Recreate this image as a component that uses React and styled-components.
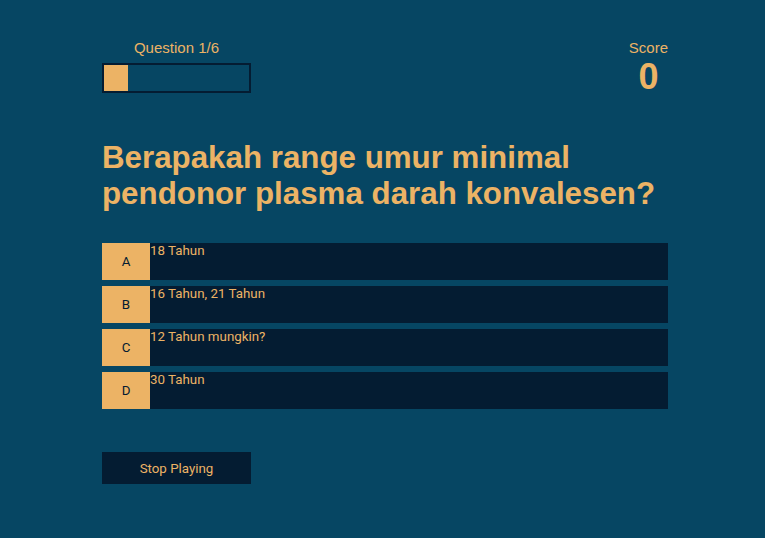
import React from "react";
import styled, { createGlobalStyle } from "styled-components";

const GlobalStyle = createGlobalStyle`
  html, body {
    margin: 0;
    padding: 0;
    background: #064663;
  }
  body {
    font-family: "Liberation Sans", Arial, sans-serif;
  }
`;

const Page = styled.div`
  width: 566px;
  padding: 39px 0 40px 102px;
  display: flex;
  flex-direction: column;
`;

const Header = styled.div`
  display: flex;
  justify-content: space-between;
  align-items: flex-start;
`;

const Stat = styled.div`
  display: flex;
  flex-direction: column;
  align-items: center;
  color: #ecb365;
`;

const Label = styled.span`
  font-size: 15px;
  line-height: 17px;
`;

const Progress = styled.div`
  margin-top: 7px;
  width: 149px;
  height: 30px;
  box-sizing: border-box;
  border: 2px solid #041c32;
`;

const Fill = styled.div`
  height: 100%;
  background: #ecb365;
`;

const ScoreValue = styled.span`
  font-size: 36px;
  font-weight: 700;
  line-height: 41px;
`;

const Question = styled.h1`
  margin: 43px 0 31px;
  font-size: 31.3px;
  line-height: 36px;
  font-weight: 700;
  color: #ecb365;
`;

const Answers = styled.div`
  display: flex;
  flex-direction: column;
  gap: 6px;
`;

const Answer = styled.div`
  display: flex;
  height: 37px;
  background: #041c32;
  cursor: pointer;
  font-family: Roboto, "Liberation Sans", sans-serif;
  font-size: 13.333px;
`;

const Letter = styled.div`
  width: 48px;
  flex-shrink: 0;
  display: flex;
  align-items: center;
  justify-content: center;
  background: #ecb365;
  color: #041c32;
`;

const AnswerText = styled.div`
  color: #ecb365;
  line-height: 15px;
`;

const StopButton = styled.button`
  margin-top: 43px;
  width: 149px;
  height: 32px;
  border: none;
  background: #041c32;
  color: #ecb365;
  font-family: Roboto, "Liberation Sans", sans-serif;
  font-size: 13.333px;
  cursor: pointer;
`;

const answers = [
  { key: "A", text: "18 Tahun" },
  { key: "B", text: "16 Tahun, 21 Tahun" },
  { key: "C", text: "12 Tahun mungkin?" },
  { key: "D", text: "30 Tahun" },
];

export default function App() {
  const current = 1;
  const total = 6;
  return (
    <>
      <GlobalStyle />
      <Page>
        <Header>
          <Stat>
            <Label>
              Question {current}/{total}
            </Label>
            <Progress>
              <Fill style={{ width: `${(current / total) * 100}%` }} />
            </Progress>
          </Stat>
          <Stat>
            <Label>Score</Label>
            <ScoreValue>0</ScoreValue>
          </Stat>
        </Header>
        <Question>
          Berapakah range umur minimal pendonor plasma darah konvalesen?
        </Question>
        <Answers>
          {answers.map((a) => (
            <Answer key={a.key}>
              <Letter>{a.key}</Letter>
              <AnswerText>{a.text}</AnswerText>
            </Answer>
          ))}
        </Answers>
        <div>
          <StopButton>Stop Playing</StopButton>
        </div>
      </Page>
    </>
  );
}
